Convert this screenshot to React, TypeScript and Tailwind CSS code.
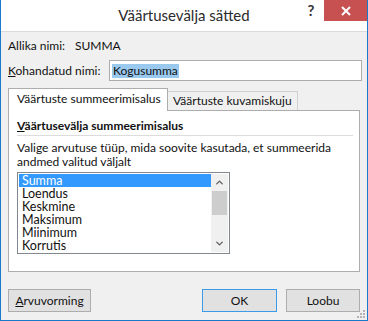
import { ChevronUp, ChevronDown } from "lucide-react"

const items = ["Summa", "Loendus", "Keskmine", "Maksimum", "Miinimum", "Korrutis"]

function ResizeGrip() {
  // dotted triangle in the lower right corner
  const dots = [
    [6, 0],
    [6, 3],
    [3, 3],
    [6, 6],
    [3, 6],
    [0, 6],
  ]
  return (
    <svg width="8" height="8" viewBox="0 0 8 8" className="absolute bottom-[2px] right-[2px]">
      {dots.map(([x, y], i) => (
        <rect key={i} x={x} y={y} width="2" height="2" fill="#b4b4b4" />
      ))}
    </svg>
  )
}

export default function App() {
  return (
    <div
      className="relative w-[368px] h-[321px] flex flex-col overflow-hidden bg-[#f0f0f0] border-x border-b border-[#1979ca] text-[12px] text-[#111] whitespace-nowrap"
      style={{ fontFamily: 'Lato, "Noto Sans", sans-serif' }}
    >
      {/* title bar */}
      <div className="relative h-[32px] shrink-0 bg-white border-b border-[#dadada] flex items-center justify-center">
        <span className="text-[15px] text-[#2b2b2b] leading-none pb-[1px]">Väärtusevälja sätted</span>
        <div className="absolute top-0 right-0 flex">
          <span className="w-[20px] h-[21px] flex items-center justify-center text-[15px] font-bold text-[#333] mr-[3px]">?</span>
          <div className="w-[43px] h-[21px] bg-[#c75050] flex items-center justify-center">
            <svg width="10" height="10" viewBox="0 0 10 10">
              <path d="M1 1L9 9M9 1L1 9" stroke="white" strokeWidth="2" />
            </svg>
          </div>
        </div>
      </div>

      {/* body */}
      <div className="flex-1 flex flex-col px-[7px] pt-[6px]">
        <div className="flex items-center h-[15px] leading-[15px]">
          <span className="w-[67px]">Allika nimi:</span>
          <span>SUMMA</span>
        </div>

        <div className="flex items-center mt-[7px] h-[21px]">
          <span className="w-[101px] shrink-0">
            <span className="underline">K</span>ohandatud nimi:
          </span>
          <div className="w-[253px] shrink-0 h-[21px] bg-white border border-[#adadad] flex items-center px-[2px]">
            <span className="bg-[#99c9ef] px-[1px] leading-[14px]">Kogusumma</span>
          </div>
        </div>

        {/* tabs */}
        <div className="flex items-end mt-[7px] h-[22px] relative z-10">
          <div className="h-[23px] w-[160px] bg-white border border-b-0 border-[#adadad] flex items-center px-[8px] -mb-px pb-[2px]">
            Väärtuste summeerimisalus
          </div>
          <div className="h-[19px] w-[130px] bg-[#f0f0f0] border border-l-0 border-b-0 border-[#d0d0d0] flex items-center px-[5px]">
            Väärtuste kuvamiskuju
          </div>
        </div>

        <div className="w-[352px] h-[162px] shrink-0 bg-white border border-[#adadad] px-[8px] pt-[7px]">
          <div className="font-bold leading-[16px]">
            <span className="underline">V</span>äärtusevälja summeerimisalus
          </div>
          <div className="h-px bg-[#dcdcdc] mt-[1px] mr-[-2px]" />
          <div className="mt-[5px] leading-[14px]">
            Valige arvutuse tüüp, mida soovite kasutada, et summeerida
            <br />
            andmed valitud väljalt
          </div>

          <div className="mt-[3px] w-[213px] h-[82px] border border-[#828790] bg-white flex p-px">
            <div className="flex-1 flex flex-col">
              {items.map((item, i) => (
                <div
                  key={item}
                  className={`h-[13px] leading-[13px] px-[3px] text-[12.5px] ${i === 0 ? "bg-[#3399ff] text-white" : ""}`}
                >
                  {item}
                </div>
              ))}
            </div>
            <div className="w-[17px] bg-[#f0f0f0] flex flex-col items-center">
              <div className="h-[17px] flex items-center justify-center">
                <ChevronUp size={11} strokeWidth={3} color="#606060" />
              </div>
              <div className="w-[15px] h-[24px] bg-[#cdcdcd]" />
              <div className="flex-1" />
              <div className="h-[17px] flex items-center justify-center">
                <ChevronDown size={11} strokeWidth={3} color="#606060" />
              </div>
            </div>
          </div>
        </div>

        {/* buttons */}
        <div className="flex items-center mt-[17px]">
          <button className="w-[83px] h-[23px] bg-[#e1e1e1] border border-[#adadad]">
            <span className="underline">A</span>rvuvorming
          </button>
          <div className="flex-1" />
          <button className="w-[75px] h-[23px] bg-[#e1e1e1] border border-[#3c9be8]">OK</button>
          <button className="w-[74px] h-[23px] bg-[#e1e1e1] border border-[#adadad] ml-[9px]">Loobu</button>
        </div>
      </div>
      <ResizeGrip />
    </div>
  )
}
